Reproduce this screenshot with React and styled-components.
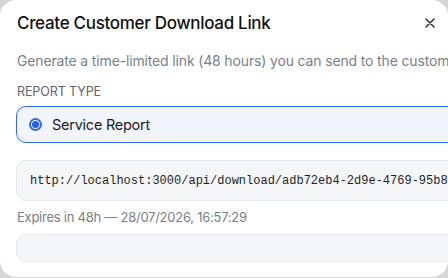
import React from "react";
import styled, { createGlobalStyle } from "styled-components";

const Global = createGlobalStyle`
  html, body {
    margin: 0;
    padding: 0;
    background: #d6d6d8;
  }
  * {
    box-sizing: border-box;
  }
`;

const Modal = styled.div`
  width: 448px;
  height: 277px;
  background: #ffffff;
  border-radius: 16px;
  overflow: hidden;
  font-family: "Inter", "Noto Sans", sans-serif;
`;

const Inner = styled.div`
  width: 520px;
  padding: 12px 0 0 16px;
  display: flex;
  flex-direction: column;
`;

const Header = styled.div`
  width: 432px;
  display: flex;
  align-items: center;
  justify-content: space-between;
  padding-left: 1px;
  height: 22px;
`;

const Title = styled.h2`
  margin: 0;
  font-size: 17px;
  font-weight: 500;
  letter-spacing: -0.3px;
  color: #111111;
`;

const Close = styled.button`
  border: none;
  background: none;
  padding: 0;
  width: 12px;
  height: 12px;
  margin-right: 12px;
  display: flex;
  align-items: center;
  justify-content: center;
  color: #222;
`;

const Subtitle = styled.p`
  margin: 18px 0 0 1px;
  font-size: 14px;
  letter-spacing: -0.15px;
  color: #7a7f87;
  white-space: nowrap;
`;

const Label = styled.div`
  margin: 15px 0 0 1px;
  font-size: 12.5px;
  letter-spacing: -0.1px;
  color: #5f646b;
  text-transform: uppercase;
`;

const Option = styled.label`
  margin-top: 7px;
  height: 37px;
  display: flex;
  align-items: center;
  gap: 10px;
  padding-left: 12px;
  border: 1px solid ${(p) => (p.$active ? "#2f6bf0" : "#e3e5e9")};
  background: ${(p) => (p.$active ? "#f2f5fd" : "#fff")};
  border-radius: 10px;
  font-size: 14.5px;
  letter-spacing: -0.25px;
  color: #1c1c1c;
`;

const Radio = styled.span`
  width: 13px;
  height: 13px;
  border-radius: 50%;
  border: 2px solid #2f6bf0;
  display: flex;
  align-items: center;
  justify-content: center;
  &::after {
    content: "";
    width: 7px;
    height: 7px;
    border-radius: 50%;
    background: #1f5cf0;
  }
`;

const Field = styled.div`
  margin-top: ${(p) => p.$top || 0}px;
  height: ${(p) => p.$h}px;
  display: flex;
  align-items: center;
  padding-left: 13px;
  background: #f5f6f8;
  border: 1px solid #e4e6ea;
  border-radius: 10px;
  font-family: "Liberation Mono", "DejaVu Sans Mono", monospace;
  font-size: 12px;
  color: #1f1f1f;
  white-space: nowrap;
  overflow: hidden;
`;

const Hint = styled.div`
  margin: 8px 0 0 1px;
  font-size: 13px;
  letter-spacing: -0.25px;
  color: #7a7f87;
`;

export default function App() {
  return (
    <>
      <Global />
      <Modal>
        <Inner>
          <Header>
            <Title>Create Customer Download Link</Title>
            <Close aria-label="Close">
              <svg width="10" height="10" viewBox="0 0 10 10">
                <path
                  d="M1 1L9 9M9 1L1 9"
                  stroke="currentColor"
                  strokeWidth="1.4"
                  strokeLinecap="round"
                />
              </svg>
            </Close>
          </Header>
          <Subtitle>
            Generate a time-limited link (48 hours) you can send to the customer.
          </Subtitle>
          <Label>Report Type</Label>
          <Option $active>
            <Radio />
            Service Report
          </Option>
          <Field $top={17} $h={41}>
            http://localhost:3000/api/download/adb72eb4-2d9e-4769-95b8
          </Field>
          <Hint>Expires in 48h — 28/07/2026, 16:57:29</Hint>
          <Field $top={9} $h={28} />
        </Inner>
      </Modal>
    </>
  );
}
